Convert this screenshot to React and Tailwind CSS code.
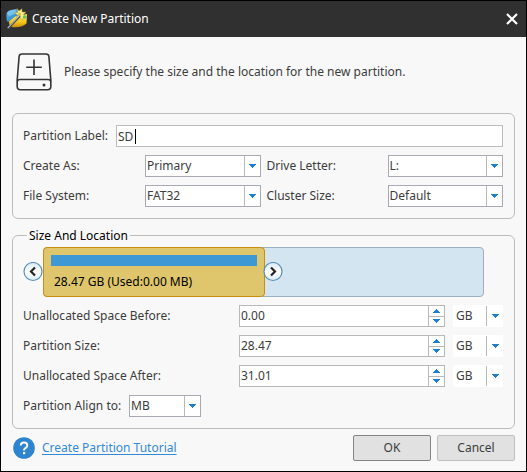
import { useId } from "react";

function DownArrow() {
  return (
    <svg width="7" height="4" viewBox="0 0 7 4" shapeRendering="crispEdges" fill="#1e7fd2" aria-hidden="true">
      <path d="M0 0h7v1H6v1H5v1H4v1H3V3H2V2H1V1H0z" />
    </svg>
  );
}

function UpArrow() {
  return (
    <svg width="7" height="4" viewBox="0 0 7 4" shapeRendering="crispEdges" fill="#1e7fd2" aria-hidden="true">
      <path d="M3 0h1v1h1v1h1v1h1v1H0V3h1V2h1V1h1z" />
    </svg>
  );
}

function Dropdown({ id, label, value, options, flat = false }) {
  return (
    <div className={flat ? "relative h-[22px] bg-white" : "relative h-[22px] border border-[#a9a9b2] bg-white"}>
      <select
        id={id}
        aria-label={label}
        defaultValue={value}
        className={
          flat
            ? "block h-full w-full appearance-none bg-transparent pr-4 pl-[3px] outline-none"
            : "block h-full w-full appearance-none bg-transparent pr-4 pl-[1px] outline-none"
        }
      >
        {options.map((o) => (
          <option key={o}>{o}</option>
        ))}
      </select>
      <span
        className={
          flat
            ? "pointer-events-none absolute inset-y-px right-0 flex w-[17px] items-center justify-center border-l border-[#b9b9b9]"
            : "pointer-events-none absolute inset-y-0 right-0 flex w-4 items-center justify-center border-l border-[#b9b9b9]"
        }
      >
        <DownArrow />
      </span>
    </div>
  );
}

function SelectField({ label, value, options }) {
  const id = useId();
  return (
    <>
      <label htmlFor={id}>{label}</label>
      <Dropdown id={id} value={value} options={options} />
    </>
  );
}

function SizeRow({ label, value }) {
  const id = useId();
  return (
    <div className="grid grid-cols-[208px_1fr_50px] items-center gap-2">
      <label htmlFor={id}>{label}</label>
      <div className="flex h-[22px] border border-[#b9b9b9] bg-white">
        <input id={id} defaultValue={value} className="min-w-0 flex-1 bg-transparent pl-[1px] outline-none" />
        <div className="flex w-4 flex-col border-l border-[#b9b9b9]">
          <button type="button" aria-label="Increase" className="flex flex-1 items-center justify-center border-b border-[#b9b9b9]">
            <UpArrow />
          </button>
          <button type="button" aria-label="Decrease" className="flex flex-1 items-center justify-center">
            <DownArrow />
          </button>
        </div>
      </div>
      <Dropdown flat label={label + " unit"} value="GB" options={["MB", "GB", "TB"]} />
    </div>
  );
}

function Handle({ direction }) {
  return (
    <svg width="20" height="20" viewBox="0 0 20 20" className="block" aria-hidden="true">
      <defs>
        <linearGradient id={"handle-" + direction} x1="0" y1="0" x2="0" y2="1">
          <stop offset="0" stopColor="#d9ebf8" />
          <stop offset="0.55" stopColor="#ffffff" />
          <stop offset="1" stopColor="#d6ebf8" />
        </linearGradient>
      </defs>
      <circle cx="10" cy="9.500" r="9" fill={"url(#handle-" + direction + ")"} stroke="#5b8fb5" strokeWidth="1.2" />
      <path
        d={direction === "left" ? "M12 5.500L8 9.500L12 13.500" : "M8 5.500L12 9.500L8 13.500"}
        fill="none"
        stroke="#252525"
        strokeWidth="2.2"
      />
    </svg>
  );
}

function AppLogo() {
  return (
    <svg width="22" height="22" viewBox="0 0 22 22" aria-hidden="true">
      <defs>
        <linearGradient id="logo-blue" x1="0" y1="0" x2="1" y2="1">
          <stop offset="0" stopColor="#64bdf0" />
          <stop offset="1" stopColor="#1670ba" />
        </linearGradient>
        <linearGradient id="logo-gold" x1="0" y1="0" x2="0" y2="1">
          <stop offset="0" stopColor="#fbe96c" />
          <stop offset="0.6" stopColor="#f4c91c" />
          <stop offset="1" stopColor="#cf8d08" />
        </linearGradient>
      </defs>
      <path d="M0.5 6Q1 1.500 10 1.200L14 3L10 10L2 14Q0 13 0.500 6z" fill="url(#logo-blue)" />
      <path d="M0.800 5Q4 1.500 11 1.500L9 6L3 8z" fill="#8dcff3" opacity="0.7" />
      <path d="M3 13.500L9 8.500L21 6L20.500 15.500Q16 20 6 19Q3 18 3 13.500z" fill="url(#logo-gold)" />
      <path d="M11 0.500L13 3L16 0.800L16 4L20 4.200L17.500 6.500L21 9L17.300 9.200L16.500 12L13.800 9.500L10.500 10.500L11.500 7L8.800 5L12 4.200z" fill="#f9ee87" stroke="#b89720" strokeWidth="0.5" />
      <circle cx="13.500" cy="6.500" r="1.800" fill="#d6bd52" />
      <circle cx="18.500" cy="9" r="1.800" fill="#69c65a" />
      <path d="M2 20.500L14 8" stroke="#454d54" strokeWidth="2.2" />
      <path d="M1.700 20L13.700 7.500" stroke="#dce3e8" strokeWidth="1" />
    </svg>
  );
}

function DriveIcon() {
  return (
    <svg width="36" height="38" viewBox="0 0 36 38" fill="none" stroke="#333333" strokeWidth="1.6" aria-hidden="true">
      <path d="M6 1H30Q32.600 1 32.900 3.500L34.800 27V33.500Q34.800 36.800 31.500 36.800H4.500Q1.200 36.800 1.200 33.500V27L3.100 3.500Q3.400 1 6 1z" />
      <path d="M1.500 28.500Q1.500 26.500 4 26.500H32Q34.500 26.500 34.500 28.500" strokeWidth="1.500" />
      <path d="M18 6.500V22M10.200 14.200H25.800" />
      <circle cx="28" cy="32" r="1.500" fill="#333333" stroke="none" />
    </svg>
  );
}

export default function App() {
  const labelId = useId();
  const alignId = useId();
  return (
    <main className="flex min-h-screen flex-col border border-black bg-[#f8f8f8] font-['Noto_Sans',sans-serif] text-xs text-[#3c3c3c]">
      <header className="flex h-9 items-center bg-[#303030] pr-2 pl-[5px] text-white">
        <AppLogo />
        <h1 className="ml-1 flex-1">Create New Partition</h1>
        <button type="button" aria-label="Close">
          <svg width="12" height="12" viewBox="0 0 12 12" stroke="#fff" strokeWidth="2.2" aria-hidden="true">
            <path d="M1 1L11 11M11 1L1 11" />
          </svg>
        </button>
      </header>

      <form className="px-[11px] pb-[10px]" onSubmit={(e) => e.preventDefault()}>
        <div className="flex items-center gap-3 pt-4 pb-[22px] pl-1">
          <DriveIcon />
          <p>Please specify the size and the location for the new partition.</p>
        </div>

        <section className="flex flex-col gap-2 rounded-md border border-[#bcbcbc] py-[11px] pr-[11px] pl-[10px]">
          <div className="flex items-center">
            <label htmlFor={labelId} className="w-[93px]">Partition Label:</label>
            <div className="relative h-[22px] flex-1 border border-[#bcbcbc] bg-white">
              <input id={labelId} defaultValue="SD" className="block h-full w-full bg-transparent pl-[1px] outline-none" />
              <span className="absolute top-[3px] left-[18px] h-[15px] w-px bg-black" />
            </div>
          </div>
          <div className="grid grid-cols-[122px_1fr_127px_1fr] items-center gap-y-2 [&>label:nth-of-type(even)]:pl-[6px]">
            <SelectField label="Create As:" value="Primary" options={["Primary", "Logical"]} />
            <SelectField label="Drive Letter:" value="L:" options={["L:", "M:", "N:"]} />
            <SelectField label="File System:" value="FAT32" options={["FAT32", "NTFS", "exFAT"]} />
            <SelectField label="Cluster Size:" value="Default" options={["Default", "4 KB", "8 KB"]} />
          </div>
        </section>

        <fieldset className="mt-[9px] min-w-0 rounded-md border border-[#bcbcbc] pt-1 pr-[11px] pb-[11px] pl-[10px]">
          <legend className="ml-1 px-[2px] leading-[15px] text-black">Size And Location</legend>
          <div className="flex items-center pr-[19px]">
            <Handle direction="left" />
            <div className="flex h-[50px] flex-1 rounded-sm border border-[#9db0c6] bg-[#d2e5f0]">
              <div className="relative -m-px w-[222px] rounded-sm border border-[#c98d10] bg-[#dfc66c] px-[7px] pt-[7px] text-black">
                <div className="h-[11px] bg-[#3e98d3]" />
                <p className="mt-2 pl-[3px] leading-4">28.47 GB (Used:0.00 MB)</p>
                <div className="absolute top-[14px] -right-[19px]">
                  <Handle direction="right" />
                </div>
              </div>
            </div>
          </div>
          <div className="mt-2 flex flex-col gap-2">
            <SizeRow label="Unallocated Space Before:" value="0.00" />
            <SizeRow label="Partition Size:" value="28.47" />
            <SizeRow label="Unallocated Space After:" value="31.01" />
            <div className="grid grid-cols-[106px_72px] items-center">
              <label htmlFor={alignId}>Partition Align to:</label>
              <Dropdown id={alignId} value="MB" options={["MB", "Cylinder", "None"]} />
            </div>
          </div>
        </fieldset>

        <footer className="mt-[6px] flex h-[26px] items-center">
          <svg width="22" height="22" viewBox="0 0 22 22" className="ml-px" aria-hidden="true">
            <circle cx="11" cy="11" r="10.800" fill="#2e84cf" />
            <path d="M7.800 8.600Q7.800 5.500 11 5.500Q14.300 5.500 14.300 8.300Q14.300 9.900 12.700 10.800Q11 11.700 11 13.500" fill="none" stroke="#fff" strokeWidth="2" />
            <rect x="10" y="15" width="2.200" height="2.200" fill="#fff" />
          </svg>
          <a href="#tutorial" className="ml-[7px] text-[#3389dc] underline underline-offset-2">Create Partition Tutorial</a>
          <button type="submit" className="ml-auto h-[26px] w-[78px] rounded-xs border border-[#858585] bg-[#e1e1e1]">OK</button>
          <button type="button" className="ml-[6px] h-[26px] w-[78px] rounded-xs border border-[#c0c0c0] bg-[#e1e1e1]">Cancel</button>
        </footer>
      </form>
    </main>
  );
}
